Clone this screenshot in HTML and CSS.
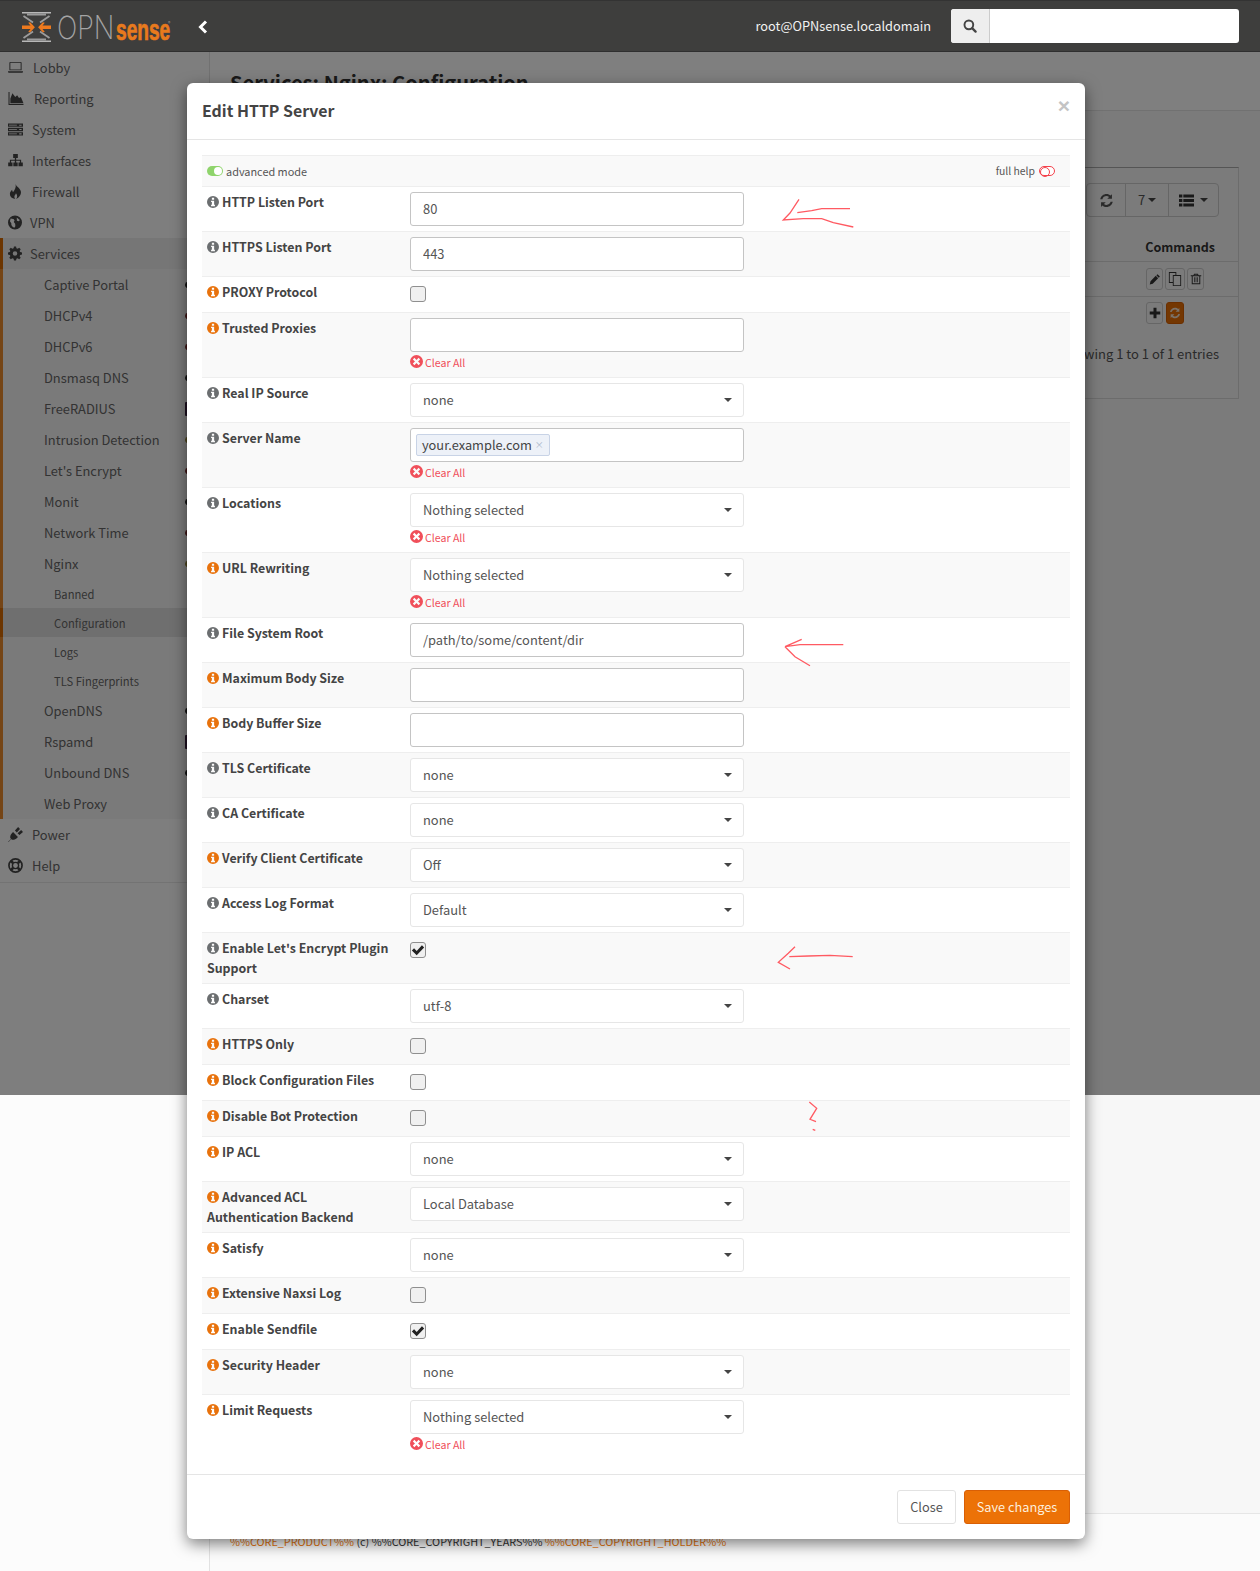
FILE: index.html
```html
<!DOCTYPE html>
<html lang="en">
<head>
<meta charset="utf-8">
<title>Services: Nginx: Configuration</title>
<link rel="stylesheet" href="styles.css">
</head>
<body>
<svg class="sprite" aria-hidden="true">
  <symbol id="info" viewBox="0 0 16 16"><path fill-rule="evenodd" d="M8 0a8 8 0 1 0 0 16A8 8 0 0 0 8 0z M6.500 2.400h3v2.500h-3z M5.400 6.200h4.100v5.500h1.100v1.900H5.400v-1.900h1.100V8.100H5.400z"/></symbol>
  <symbol id="xc" viewBox="0 0 16 16"><path fill-rule="evenodd" d="M8 0a8 8 0 1 0 0 16A8 8 0 0 0 8 0z M5.400 3.500 8 6.100l2.600-2.600 1.900 1.900L9.900 8l2.600 2.600-1.900 1.900L8 9.900l-2.600 2.600-1.900-1.900L6.100 8 3.500 5.400z"/></symbol>
  <symbol id="laptop" viewBox="0 0 16 16"><path fill-rule="evenodd" d="M2.500 2h11a1 1 0 0 1 1 1v8h-13V3a1 1 0 0 1 1-1z M2.500 3v7h11V3z M0 12h16v.5a1 1 0 0 1-1 1H1a1 1 0 0 1-1-1z"/></symbol>
  <symbol id="chart" viewBox="0 0 16 16"><path d="M0 1h1.100v12.900H16V15H0z M2 13V8l2.200-5.500 3 4 2-2 2 3 2-1 2.800 6.500z"/></symbol>
  <symbol id="server" viewBox="0 0 16 16"><path fill-rule="evenodd" d="M0 1.500h16v3.600H0z M0 6.200h16v3.600H0z M0 10.900h16v3.600H0z M1 3v.8h8.500V3z M12 2.800v1.200h2.500V2.800z M1 7.600v.8h8.500v-.8z M12 7.400v1.200h2.500V7.400z M1 12.300v.8h8.500v-.8z M12 12.100v1.200h2.500v-1.200z"/></symbol>
  <symbol id="sitemap" viewBox="0 0 16 16"><path d="M5.500 1h5v4.200H8.700v1.900H14v3h1.800V14h-4.600v-3.900h1.500V8.300H8.700v1.800H10.300V14H5.700v-3.900h1.600V8.300H3.300v1.800h1.500V14H.2v-3.900H2V7.100h5.300V5.200H5.500z"/></symbol>
  <symbol id="fire" viewBox="0 0 16 16"><path d="M8 0c1 3 5.300 4.500 5.800 8.200.4 3.600-2.600 6.700-5.300 7.800 1.700-2 1.700-4.200 0-6.200-.4 1.500-1.700 2.200-1.700 3.700 0 1 .4 1.900.9 2.500C3.800 15.300 1.800 13 2 10.300c.1-1.900 1.400-3.300 2.400-4.300 0 1.100.4 2 1.100 2.500C7.300 6 9 3.500 8 0z"/></symbol>
  <symbol id="globe" viewBox="0 0 16 16"><path fill-rule="evenodd" d="M8 0a8 8 0 1 0 0 16A8 8 0 0 0 8 0z M3 3.500c1.200 0 2.200.8 3.300.6l1.200 1.700-.9 1.600 1.600 1.900.2 2.900-1.200 1.800C5 13 3.400 11 3.800 8.800L2.200 6.500z M10 2.400l3.500 2.600-1 1.500-2.300-.6z"/></symbol>
  <symbol id="cog" viewBox="0 0 16 16"><path fill-rule="evenodd" d="M6.800 0h2.400l.4 2.100 1.400.6 1.800-1.200 1.700 1.700-1.200 1.800.6 1.400 2.100.4v2.400l-2.100.4-.6 1.400 1.200 1.800-1.700 1.700-1.800-1.200-1.400.6-.4 2.100H6.800l-.4-2.100-1.400-.6-1.800 1.200-1.700-1.700 1.200-1.800-.6-1.400L0 9.200V6.800l2.100-.4.6-1.400-1.200-1.800 1.700-1.700 1.800 1.200 1.400-.6z M8 5.400a2.600 2.600 0 1 0 0 5.200 2.600 2.600 0 0 0 0-5.200z"/></symbol>
  <symbol id="plug" viewBox="0 0 16 16"><path d="M0 16l3.200-3.400-.8-.8c-.3-2.400.8-4.200 2-5.400L5.400 5.400l5.200 5.200-1 1c-1.200 1.200-3 2.300-5.400 2L3.400 12.800.6 16z M7.400 3.800 10.800 0 12.800 2 9.400 5.800z M10.200 6.600 14 3.200 16 5.200 12.200 8.600z"/></symbol>
  <symbol id="ring" viewBox="0 0 16 16"><circle cx="8" cy="8" r="7" fill="none" stroke="currentColor" stroke-width="1.800"/><circle cx="8" cy="8" r="3.300" fill="none" stroke="currentColor" stroke-width="1.500"/><path stroke="currentColor" stroke-width="2.800" d="M3 3l2.600 2.600M13 3l-2.600 2.600M3 13l2.600-2.600M13 13l-2.600-2.600"/></symbol>
  <symbol id="search" viewBox="0 0 16 16"><circle cx="6.700" cy="6.700" r="5" fill="none" stroke="currentColor" stroke-width="2.200"/><path stroke="currentColor" stroke-width="2.600" stroke-linecap="round" d="M10.700 10.700l3.700 3.700"/></symbol>
  <symbol id="refresh" viewBox="0 0 16 16"><path d="M13.800 1.200v5H8.800l1.900-1.900C9.900 3.600 9 3.300 8 3.300c-2 0-3.800 1.300-4.400 3.300H1.300C2 3.300 4.700 1 8 1c1.700 0 3.200.7 4.300 1.700z M2.200 14.800v-5h5l-1.900 1.900c.8.700 1.700 1 2.700 1 2 0 3.800-1.300 4.400-3.300h2.300C14 12.700 11.300 15 8 15c-1.700 0-3.200-.7-4.300-1.700z"/></symbol>
  <symbol id="list" viewBox="0 0 16 16"><path d="M0 1.500h3.600v3.400H0z M4.600 1.500H16v3.400H4.600z M0 6.300h3.600v3.400H0z M4.600 6.300H16v3.400H4.600z M0 11.100h3.600v3.400H0z M4.600 11.100H16v3.400H4.600z"/></symbol>
  <symbol id="pencil" viewBox="0 0 16 16"><path d="M11.300 1.500l3.200 3.200-1.500 1.500-3.200-3.200z M9 3.800l3.200 3.200-7.200 7.200-4 1 1-4.200z"/></symbol>
  <symbol id="copy" viewBox="0 0 16 16"><path fill-rule="evenodd" d="M1 0h8.500v3.500H15V16H5.500v-3.500H1z M2 1v10.500h3.500V3.500H8.500V1z M6.500 4.500V15H14V4.500z"/></symbol>
  <symbol id="trash" viewBox="0 0 16 16"><path fill-rule="evenodd" d="M5.500 1h5l1 2H15v1.300h-1.300V15H2.300V4.300H1V3h3.500z M6.300 2.200 5.800 3h4.400l-.5-.8z M3.600 4.300v9.400h8.800V4.300z M5.300 5.800h1v6.500h-1z M7.500 5.800h1v6.500h-1z M9.700 5.800h1v6.500h-1z"/></symbol>
  <symbol id="plus" viewBox="0 0 16 16"><path d="M6 1h4v5h5v4h-5v5H6v-5H1V6h5z"/></symbol>
  <symbol id="check" viewBox="0 0 16 16"><path d="M1 8.500 3.500 6l3 3L12.500 2.500 15 5l-8.500 9z"/></symbol>
</svg>

<header class="topbar">
  <svg class="logo" viewBox="0 0 152 32" width="152" height="32" role="img" aria-label="OPNsense">
    <path class="logo-bar" d="M0 1h29v1.600H0z M0 29.400h29V31H0z"/>
    <path class="logo-diag" d="M1.500 5 11 11.500M27.500 5 18 11.500M1.500 27 11 20.500M27.500 27 18 20.500M5 3.500h19M5 28.500h19"/>
    <path class="logo-arrow" d="M0 14.500h8.500l-2.300-2.800 2-.4 4.700 5-4.700 5-2-.4 2.300-2.800H0z M29 14.500h-8.500l2.300-2.800-2-.4-4.700 5 4.700 5 2-.4-2.300-2.800H29z"/>
    <text class="logo-opn" transform="translate(35 27.500) scale(.84 1)">OPN</text>
    <text class="logo-sense" transform="translate(94 28.500) scale(.66 1)">sense</text>
    <text class="logo-reg" x="146" y="14">®</text>
  </svg>
  <svg class="collapse" viewBox="0 0 10 14" width="10" height="14"><path d="M8 1.500 2.500 7 8 12.500" fill="none" stroke="#fff" stroke-width="3"/></svg>
  <span class="user">root@OPNsense.localdomain</span>
  <div class="search">
    <span class="search-addon"><svg class="search-ico"><use href="#search"/></svg></span>
    <span class="search-input"></span>
  </div>
</header>

<div class="page">
  <nav class="sidebar">
    <a class="nav-item"><svg class="nav-ico"><use href="#laptop"/></svg>Lobby</a>
    <a class="nav-item"><svg class="nav-ico nav-ico-wide"><use href="#chart"/></svg>Reporting</a>
    <a class="nav-item"><svg class="nav-ico nav-ico-tight"><use href="#server"/></svg>System</a>
    <a class="nav-item"><svg class="nav-ico nav-ico-tight"><use href="#sitemap"/></svg>Interfaces</a>
    <a class="nav-item"><svg class="nav-ico nav-ico-tight"><use href="#fire"/></svg>Firewall</a>
    <a class="nav-item"><svg class="nav-ico nav-ico-small"><use href="#globe"/></svg>VPN</a>
    <div class="nav-group">
      <a class="nav-item nav-item-open"><svg class="nav-ico nav-ico-small"><use href="#cog"/></svg>Services</a>
      <a class="nav-sub">Captive Portal<i class="nav-mark"></i></a>
      <a class="nav-sub">DHCPv4<i class="nav-mark nav-mark-red"></i></a>
      <a class="nav-sub">DHCPv6<i class="nav-mark nav-mark-red"></i></a>
      <a class="nav-sub">Dnsmasq DNS<i class="nav-mark"></i></a>
      <a class="nav-sub">FreeRADIUS<i class="nav-mark nav-mark-tall"></i></a>
      <a class="nav-sub">Intrusion Detection<i class="nav-mark nav-mark-olive"></i></a>
      <a class="nav-sub">Let's Encrypt<i class="nav-mark nav-mark-red"></i></a>
      <a class="nav-sub">Monit<i class="nav-mark"></i></a>
      <a class="nav-sub">Network Time<i class="nav-mark nav-mark-red"></i></a>
      <a class="nav-sub">Nginx<i class="nav-mark nav-mark-olive"></i></a>
      <a class="nav-leaf">Banned</a>
      <a class="nav-leaf nav-leaf-active">Configuration</a>
      <a class="nav-leaf">Logs</a>
      <a class="nav-leaf">TLS Fingerprints</a>
      <a class="nav-sub">OpenDNS<i class="nav-mark"></i></a>
      <a class="nav-sub">Rspamd<i class="nav-mark nav-mark-tall"></i></a>
      <a class="nav-sub">Unbound DNS<i class="nav-mark"></i></a>
      <a class="nav-sub">Web Proxy</a>
    </div>
    <a class="nav-item"><svg class="nav-ico nav-ico-tight"><use href="#plug"/></svg>Power</a>
    <a class="nav-item"><svg class="nav-ico nav-ico-tight"><use href="#ring"/></svg>Help</a>
  </nav>

  <main class="main">
    <div class="main-head"><h1 class="main-title">Services: Nginx: Configuration</h1></div>
    <section class="panel">
      <div class="toolbar">
        <div class="btn-group">
          <span class="tool tool-refresh"><svg class="tool-ico"><use href="#refresh"/></svg></span>
          <span class="tool tool-count">7<i class="caret"></i></span>
          <span class="tool tool-list"><svg class="tool-ico"><use href="#list"/></svg><i class="caret"></i></span>
        </div>
      </div>
      <div class="grid-head">Commands</div>
      <div class="grid-row">
        <span class="mini"><svg class="mini-ico"><use href="#pencil"/></svg></span>
        <span class="mini mini-copy"><svg class="mini-ico"><use href="#copy"/></svg></span>
        <span class="mini"><svg class="mini-ico"><use href="#trash"/></svg></span>
      </div>
      <div class="grid-row grid-row-last">
        <span class="mini"><svg class="mini-ico"><use href="#plus"/></svg></span>
        <span class="mini mini-orange"><svg class="mini-ico"><use href="#refresh"/></svg></span>
      </div>
      <div class="grid-info">Showing 1 to 1 of 1 entries</div>
    </section>
    <footer class="footer"><span class="accent">%%CORE_PRODUCT%%</span> (c) %%CORE_COPYRIGHT_YEARS%% <span class="accent">%%CORE_COPYRIGHT_HOLDER%%</span></footer>
  </main>
</div>

<div class="backdrop"></div>

<div class="modal">
  <div class="modal-head">
    <h2 class="modal-title">Edit HTTP Server</h2>
    <span class="modal-close">×</span>
  </div>
  <div class="modal-body">
    <div class="row row-toggles">
      <span class="toggle-text"><i class="pill pill-on"></i>advanced mode</span>
      <span class="toggle-text toggle-help">full help<i class="pill pill-off"></i></span>
    </div>

    <div class="row"><span class="lbl"><svg class="info"><use href="#info"/></svg>HTTP Listen Port</span><div class="ctl"><input class="field" value="80" readonly></div></div>
    <div class="row"><span class="lbl"><svg class="info"><use href="#info"/></svg>HTTPS Listen Port</span><div class="ctl"><input class="field" value="443" readonly></div></div>
    <div class="row"><span class="lbl"><svg class="info info-adv"><use href="#info"/></svg>PROXY Protocol</span><div class="ctl"><span class="check"></span></div></div>
    <div class="row"><span class="lbl"><svg class="info info-adv"><use href="#info"/></svg>Trusted Proxies</span><div class="ctl"><input class="field" readonly><a class="clear"><svg class="clear-ico"><use href="#xc"/></svg>Clear All</a></div></div>
    <div class="row"><span class="lbl"><svg class="info"><use href="#info"/></svg>Real IP Source</span><div class="ctl"><div class="select">none<i class="caret"></i></div></div></div>
    <div class="row"><span class="lbl"><svg class="info"><use href="#info"/></svg>Server Name</span><div class="ctl"><div class="tags"><span class="tag">your.example.com<i class="tag-x">×</i></span></div><a class="clear"><svg class="clear-ico"><use href="#xc"/></svg>Clear All</a></div></div>
    <div class="row"><span class="lbl"><svg class="info"><use href="#info"/></svg>Locations</span><div class="ctl"><div class="select">Nothing selected<i class="caret"></i></div><a class="clear"><svg class="clear-ico"><use href="#xc"/></svg>Clear All</a></div></div>
    <div class="row"><span class="lbl"><svg class="info info-adv"><use href="#info"/></svg>URL Rewriting</span><div class="ctl"><div class="select">Nothing selected<i class="caret"></i></div><a class="clear"><svg class="clear-ico"><use href="#xc"/></svg>Clear All</a></div></div>
    <div class="row"><span class="lbl"><svg class="info"><use href="#info"/></svg>File System Root</span><div class="ctl"><input class="field" value="/path/to/some/content/dir" readonly></div></div>
    <div class="row"><span class="lbl"><svg class="info info-adv"><use href="#info"/></svg>Maximum Body Size</span><div class="ctl"><input class="field" readonly></div></div>
    <div class="row"><span class="lbl"><svg class="info info-adv"><use href="#info"/></svg>Body Buffer Size</span><div class="ctl"><input class="field" readonly></div></div>
    <div class="row"><span class="lbl"><svg class="info"><use href="#info"/></svg>TLS Certificate</span><div class="ctl"><div class="select">none<i class="caret"></i></div></div></div>
    <div class="row"><span class="lbl"><svg class="info"><use href="#info"/></svg>CA Certificate</span><div class="ctl"><div class="select">none<i class="caret"></i></div></div></div>
    <div class="row"><span class="lbl"><svg class="info info-adv"><use href="#info"/></svg>Verify Client Certificate</span><div class="ctl"><div class="select">Off<i class="caret"></i></div></div></div>
    <div class="row"><span class="lbl"><svg class="info"><use href="#info"/></svg>Access Log Format</span><div class="ctl"><div class="select">Default<i class="caret"></i></div></div></div>
    <div class="row"><span class="lbl"><svg class="info"><use href="#info"/></svg>Enable Let's Encrypt Plugin Support</span><div class="ctl"><span class="check check-on"><svg class="check-mark"><use href="#check"/></svg></span></div></div>
    <div class="row"><span class="lbl"><svg class="info"><use href="#info"/></svg>Charset</span><div class="ctl"><div class="select">utf-8<i class="caret"></i></div></div></div>
    <div class="row"><span class="lbl"><svg class="info info-adv"><use href="#info"/></svg>HTTPS Only</span><div class="ctl"><span class="check"></span></div></div>
    <div class="row"><span class="lbl"><svg class="info info-adv"><use href="#info"/></svg>Block Configuration Files</span><div class="ctl"><span class="check"></span></div></div>
    <div class="row"><span class="lbl"><svg class="info info-adv"><use href="#info"/></svg>Disable Bot Protection</span><div class="ctl"><span class="check"></span></div></div>
    <div class="row"><span class="lbl"><svg class="info info-adv"><use href="#info"/></svg>IP ACL</span><div class="ctl"><div class="select">none<i class="caret"></i></div></div></div>
    <div class="row"><span class="lbl"><svg class="info info-adv"><use href="#info"/></svg>Advanced ACL Authentication Backend</span><div class="ctl"><div class="select">Local Database<i class="caret"></i></div></div></div>
    <div class="row"><span class="lbl"><svg class="info info-adv"><use href="#info"/></svg>Satisfy</span><div class="ctl"><div class="select">none<i class="caret"></i></div></div></div>
    <div class="row"><span class="lbl"><svg class="info info-adv"><use href="#info"/></svg>Extensive Naxsi Log</span><div class="ctl"><span class="check"></span></div></div>
    <div class="row"><span class="lbl"><svg class="info info-adv"><use href="#info"/></svg>Enable Sendfile</span><div class="ctl"><span class="check check-on"><svg class="check-mark"><use href="#check"/></svg></span></div></div>
    <div class="row"><span class="lbl"><svg class="info info-adv"><use href="#info"/></svg>Security Header</span><div class="ctl"><div class="select">none<i class="caret"></i></div></div></div>
    <div class="row"><span class="lbl"><svg class="info info-adv"><use href="#info"/></svg>Limit Requests</span><div class="ctl"><div class="select">Nothing selected<i class="caret"></i></div><a class="clear"><svg class="clear-ico"><use href="#xc"/></svg>Clear All</a></div></div>
  </div>
  <div class="modal-foot">
    <span class="btn">Close</span>
    <span class="btn btn-primary">Save changes</span>
  </div>
</div>

<svg class="scribbles" viewBox="0 0 1260 1571" width="1260" height="1571" aria-hidden="true">
  <path d="M799 199.300 790 213 783.300 220 803.300 218.700H821.700L833.300 222.700 853.300 227"/>
  <path d="M797.300 212.700 811.700 210.700 821.700 208.700H850"/>
  <path d="M843.300 644.700H800L785 646.700 801.700 639.300M785 646.700 795 656.700 810 665.700"/>
  <path d="M852.700 956.700 830 955.300 808.300 956 789.300 956.700"/>
  <path d="M795 946.700 788.300 953.300 778.300 962.300 790 969"/>
  <path d="M809.300 1102 816.700 1108.300 810 1119.300 816 1121.700M812.700 1129.300 815.300 1130.300"/>
</svg>
</body>
</html>
```

FILE: styles.css
```css
* { box-sizing: border-box; }

html, body { margin: 0; padding: 0; }

body {
  position: relative;
  width: 1260px;
  height: 1571px;
  overflow: hidden;
  background: #fcfcfc;
  color: #444;
  font-family: "Noto Sans CJK SC", "Source Sans Pro", "Open Sans", sans-serif;
  font-size: 13px;
  line-height: 20px;
}

.sprite { position: absolute; width: 0; height: 0; }

/* top bar */
.topbar {
  position: relative;
  z-index: 1050;
  display: flex;
  align-items: center;
  height: 52px;
  padding-left: 22px;
  background: #3e3e3d;
  border-top: 1px solid #333;
  border-bottom: 1px solid #2f2f2f;
}
.logo { flex: none; margin-top: 1px; overflow: visible; }
.logo-bar { fill: #b8b8b8; }
.logo-diag { fill: none; stroke: #9c9c9c; stroke-width: 1.800; }
.logo-arrow { fill: #ee7a1e; }
.logo-opn { fill: #a4a4a4; font-family: Inter, sans-serif; font-weight: 200; font-size: 32px; }
.logo-sense { fill: #e87a1d; stroke: #e87a1d; stroke-width: 0.700; font-family: "Liberation Sans", sans-serif; font-weight: 700; font-size: 29px; }
.logo-reg { fill: #999; font-size: 5px; }
.collapse { flex: none; margin-left: 24px; margin-top: 2px; }
.user {
  margin-left: auto;
  margin-right: 20px;
  color: #f2f2f2;
  font-size: 12.750px;
}
.search {
  display: flex;
  width: 288px;
  height: 34px;
  margin-right: 21px;
  border-radius: 3px;
  overflow: hidden;
  background: #fff;
}
.search-addon {
  display: flex;
  align-items: center;
  justify-content: center;
  width: 39px;
  background: #eee;
  border-right: 1px solid #ccc;
}
.search-ico { width: 14px; height: 14px; color: #444; fill: #444; }
.search-input { flex: 1; }

/* page */
.page {
  display: flex;
  height: 1519px;
}
.sidebar {
  flex: none;
  width: 209px;
  align-self: flex-start;
  padding-bottom: 1px;
  background: #fdfdfd;
  border-bottom: 1px solid #e6e6e6;
  color: #666;
  font-size: 12.900px;
}
.nav-item {
  display: flex;
  align-items: center;
  height: 31px;
  padding-left: 8px;
}
.nav-ico { flex: none; width: 15px; height: 15px; margin-right: 10px; fill: #444; color: #444; }
.nav-ico-wide { width: 16px; margin-right: 10px; }
.nav-ico-tight { margin-right: 9px; }
.nav-ico-small { width: 14px; margin-right: 8px; }
.nav-group { border-left: 3px solid #ea8a2c; }
.nav-item-open { position: relative; padding-left: 5px; background: #ececec; }
.nav-item-open::before {
  content: "";
  position: absolute;
  left: -3px;
  top: 0;
  bottom: 0;
  width: 3px;
  background: #d96a00;
}
.nav-sub {
  display: flex;
  align-items: center;
  position: relative;
  height: 31px;
  padding-left: 41px;
  background: #f5f5f5;
}
.nav-leaf {
  display: flex;
  align-items: center;
  height: 29px;
  padding-left: 51px;
  background: #f5f5f5;
  font-size: 11.200px;
}
.nav-leaf-active { position: relative; background: #dedede; }
.nav-leaf-active::before {
  content: "";
  position: absolute;
  left: -3px;
  width: 3px;
  height: 29px;
  background: #d96a00;
}
.nav-mark {
  position: absolute;
  left: 182px;
  top: 12px;
  width: 10px;
  height: 8px;
  border-radius: 50%;
  background: #222;
}
.nav-mark-red { background: #7a2a2a; }
.nav-mark-olive { background: #9a8a3a; }
.nav-mark-tall { height: 14px; top: 9px; border-radius: 1px; background: #3a2040; }

/* main */
.main {
  flex: 1;
  display: flex;
  flex-direction: column;
  border-left: 1px solid #e2e2e2;
  background: #f7f7f7;
}
.main-head {
  height: 59px;
  padding: 17px 0 0 20px;
  background: #fff;
  border-bottom: 1px solid #e2e2e2;
}
.main-title {
  margin: 0;
  color: #333;
  font-size: 20.100px;
  line-height: 28px;
  font-weight: 600;
}
.panel {
  height: 232px;
  margin: 56px 21px 0 20px;
  background: #f7f7f7;
  border: 1px solid #d8d8d8;
  border-top-color: #aaa;
}
.toolbar {
  display: flex;
  justify-content: flex-end;
  padding: 15px 19px 0 0;
}
.btn-group {
  display: flex;
  height: 34px;
  border: 1px solid #ccc;
  border-radius: 4px;
}
.tool {
  display: flex;
  align-items: center;
  justify-content: center;
  border-left: 1px solid #ccc;
}
.tool-refresh { width: 38px; border-left: 0; }
.tool-count { width: 43px; color: #555; font-size: 13px; }
.tool-list { width: 50px; }
.tool-ico { width: 15px; height: 15px; fill: #555; }
.tool-list .tool-ico { margin-right: 3px; fill: #333; }
.caret {
  display: inline-block;
  width: 0;
  height: 0;
  margin-left: 3px;
  border-top: 4px solid #444;
  border-left: 4px solid transparent;
  border-right: 4px solid transparent;
}
.grid-head {
  padding: 20px 23px 0 0;
  height: 45px;
  text-align: right;
  color: #333;
  font-weight: 600;
  font-size: 12.500px;
  border-bottom: 1px solid #d8d8d8;
}
.grid-row {
  display: flex;
  gap: 2px;
  align-items: center;
  height: 35px;
  padding-left: 915px;
  border-bottom: 1px solid #d8d8d8;
}
.grid-row-last { border-bottom: 0; height: 31px; }
.mini {
  display: flex;
  align-items: center;
  justify-content: center;
  width: 17px;
  height: 22px;
  border: 1px solid #ccc;
  border-radius: 3px;
}
.mini-copy { width: 20px; }
.mini-copy .mini-ico { width: 14px; height: 14px; }
.mini-ico { width: 12px; height: 12px; fill: #333; }
.mini-orange { width: 18px; background: #e86f05; border-color: #d65f00; margin-left: 1px; }
.mini-orange .mini-ico { fill: #f4e3d0; }
.grid-info {
  padding: 16px 19px 0 0;
  text-align: right;
  color: #555;
  font-size: 13px;
}
.footer {
  margin-top: auto;
  height: 58px;
  padding: 17px 0 0 20px;
  background: #fbfbfb;
  border-top: 1px solid #e6e6e6;
  color: #333;
  font-size: 10.840px;
}
.accent { color: #e8760f; }

/* backdrop and modal */
.backdrop {
  position: absolute;
  z-index: 1040;
  left: 0;
  right: 0;
  top: 0;
  height: 1095px;
  background: rgba(0, 0, 0, 0.5);
}
.modal {
  position: absolute;
  z-index: 1050;
  left: 187px;
  top: 83px;
  width: 898px;
  background: #fff;
  border-radius: 6px;
  box-shadow: 0 5px 15px rgba(0, 0, 0, 0.5);
}
.modal-head {
  position: relative;
  height: 57px;
  padding: 15px;
  border-bottom: 1px solid #e5e5e5;
}
.modal-title {
  margin: 0;
  color: #444;
  font-size: 15.900px;
  line-height: 26px;
  font-weight: 600;
}
.modal-close {
  position: absolute;
  right: 15px;
  top: 11px;
  color: #c4c4c4;
  font-family: "Liberation Sans", sans-serif;
  font-size: 21px;
  line-height: 24px;
  font-weight: 700;
}
.modal-body { padding: 15px; }
.modal-foot {
  display: flex;
  justify-content: flex-end;
  gap: 8px;
  height: 65px;
  padding: 15px;
  border-top: 1px solid #e5e5e5;
}

.row {
  display: grid;
  grid-template-columns: 208px 334px;
  padding: 5px 0;
  border-top: 1px solid #eee;
}
.row:nth-child(odd) { background: #f9f9f9; }
.row-toggles {
  display: flex;
  justify-content: space-between;
  height: 31px;
  padding: 5px 15px 0 5px;
}
.toggle-text {
  display: flex;
  align-items: center;
  height: 20px;
  color: #555;
  font-size: 10.900px;
}
.toggle-help { font-size: 10.400px; }
.pill {
  display: inline-block;
  position: relative;
  width: 16px;
  height: 10px;
  border-radius: 5px;
}
.pill-on { margin-right: 3px; background: #8fd46c; }
.pill-on::after {
  content: "";
  position: absolute;
  right: 1px;
  top: 1px;
  width: 8px;
  height: 8px;
  border-radius: 50%;
  background: #fff;
}
.pill-off { margin-left: 4px; border: 1px solid #f4424c; background: #fff; }
.pill-off::after {
  content: "";
  position: absolute;
  left: 0;
  top: 0;
  width: 8px;
  height: 8px;
  border-radius: 50%;
  border: 1px solid #f4424c;
}
.lbl {
  display: block;
  padding: 0 12px 0 5px;
  color: #444;
  font-weight: 600;
  font-size: 12.400px;
}
.info {
  width: 12px;
  height: 12px;
  margin-right: 3px;
  vertical-align: -1px;
  fill: #6b6e70;
}
.info-adv { fill: #e8720c; }
.ctl { min-width: 0; }
.field, .select, .tags {
  display: block;
  width: 334px;
  height: 34px;
  background: #fff;
  border-radius: 3px;
  color: #555;
  font: inherit;
  font-size: 12.900px;
}
.field {
  padding: 0 12px 2px;
  border: 1px solid #c4c4c4;
  outline: 0;
}
.select {
  display: flex;
  align-items: center;
  justify-content: space-between;
  padding: 0 11px 0 12px;
  border: 1px solid #e6e6e6;
}
.tags {
  display: flex;
  align-items: center;
  padding-left: 5px;
  border: 1px solid #c4c4c4;
}
.tag {
  display: flex;
  align-items: center;
  height: 22px;
  padding: 0 5px;
  background: #edf1f8;
  border: 1px solid #c8d3e6;
  border-radius: 2px;
  color: #444;
  font-size: 12.800px;
}
.tag-x {
  margin-left: 3px;
  color: #a9b6c8;
  font-style: normal;
  font-size: 9px;
}
.clear {
  display: flex;
  align-items: center;
  height: 20px;
  padding-top: 2px;
  color: #f04f5a;
  font-size: 10.600px;
}
.clear-ico { width: 13px; height: 13px; margin-right: 2px; margin-top: -4px; fill: #f04f5a; }
.check {
  display: flex;
  align-items: center;
  justify-content: center;
  width: 16px;
  height: 16px;
  margin: 4px 0 5px;
  border: 1px solid #8f8f8f;
  border-radius: 3px;
  background: #f0f0f0;
}
.check-mark { width: 14px; height: 14px; fill: #222; }

.btn {
  display: flex;
  align-items: center;
  justify-content: center;
  width: 59px;
  height: 34px;
  background: #fff;
  border: 1px solid #e2e2e2;
  border-radius: 3px;
  color: #555;
  font-size: 12.750px;
}
.btn-primary {
  width: 106px;
  background: #ec7207;
  border-color: #d95f05;
  color: #fdeedd;
}

.scribbles {
  position: absolute;
  z-index: 1060;
  left: 0;
  top: 0;
  pointer-events: none;
  fill: none;
  stroke: #ff5a62;
  stroke-width: 1.300;
}
```
